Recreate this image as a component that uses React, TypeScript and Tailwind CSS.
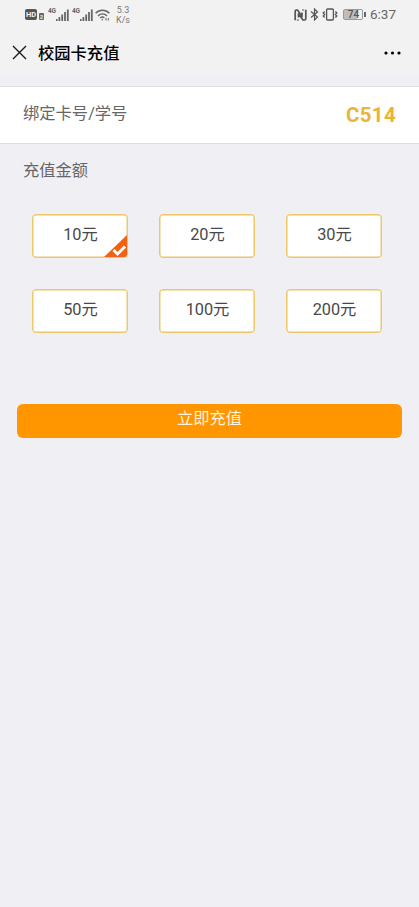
import { clsx } from "clsx";
import { useState } from "react";

const AMOUNTS = [10, 20, 30, 50, 100, 200];

export default function App() {
  const [amount, setAmount] = useState(10);

  return (
    <div className="flex min-h-screen flex-col bg-[#efeff4] font-[Roboto,'Noto_Sans_CJK_SC',sans-serif] text-[#666]">
      <header className="h-[75px] bg-[#f2f2f2]">
        <StatusBar />
        <TitleBar />
      </header>

      <section className="mt-[11px] flex h-[58px] items-center justify-between border-y border-[#dedee2] bg-white px-[23px]">
        <span className="-mt-[2px] text-[16.3px]">绑定卡号/学号</span>
        <span className="text-[20.5px] font-bold tracking-[0.3px] text-[#ebb434]">C514</span>
      </section>

      <h2 className="mt-[15px] pl-[23px] text-[16.3px] leading-6">充值金额</h2>

      <div className="mt-[31px] grid grid-cols-3 gap-x-[31px] gap-y-[31px] pr-[37px] pl-8">
        {AMOUNTS.map((value) => (
          <AmountOption
            key={value}
            value={value}
            selected={value === amount}
            onSelect={() => setAmount(value)}
          />
        ))}
      </div>

      <button className="mx-[17px] mt-[71px] flex h-[34px] justify-center rounded-[6px] bg-[#ff9600] pt-[3px] text-[16.3px] leading-6 text-[#fff3dc]">
        立即充值
      </button>
    </div>
  );
}

function AmountOption({
  value,
  selected,
  onSelect,
}: {
  value: number;
  selected: boolean;
  onSelect: () => void;
}) {
  return (
    <button
      onClick={onSelect}
      className="relative flex h-11 justify-center overflow-hidden rounded-[4px] border border-[#edc768] bg-white pt-2 pl-px text-[16.3px] leading-6 text-[#484848] shadow-[inset_0_0_0_0.5px_#edc768]"
    >
      {value}元
      {selected ? (
        <svg className="absolute right-0 bottom-0" width="23" height="22" viewBox="0 0 23 22">
          <path d="M23 0V22H0Z" fill="#f7600f" />
          <path d="M9.5 15L13.5 19L21 11.5" fill="none" stroke="#fff" strokeWidth="2.9" />
        </svg>
      ) : null}
    </button>
  );
}

function TitleBar() {
  return (
    <div className="flex h-[45px] items-center pl-3 text-black">
      <svg width="15" height="15" viewBox="0 0 15 15" stroke="#1a1a1a" strokeWidth="1.4">
        <path d="M1 1L14 14M14 1L1 14" />
      </svg>
      <h1 className="mt-[2px] ml-[11px] text-[16.3px] font-medium leading-6">校园卡充值</h1>
      <svg className="mr-[18px] ml-auto" width="17" height="4" viewBox="0 0 17 4">
        <circle cx="2" cy="2" r="1.6" />
        <circle cx="8.5" cy="2" r="1.6" />
        <circle cx="15" cy="2" r="1.6" />
      </svg>
    </div>
  );
}

function StatusBar() {
  return (
    <div className="flex h-[30px] items-center pr-[23px] pb-px pl-[25px] text-[#666]">
      <span className="flex h-[11px] w-3 items-center justify-center rounded-[2px] bg-[#555] text-[7.5px] font-bold text-[#f2f2f2]">
        HD
      </span>
      <span className="mt-[3px] ml-[2px] flex h-[7px] w-[5px] items-center justify-center rounded-[1px] bg-[#666] text-[6px] font-bold text-[#f2f2f2]">
        2
      </span>
      <Signal className="ml-1" />
      <Signal className="ml-[3px]" />
      <Wifi />
      <span className="ml-[6px] flex w-[14px] flex-col items-center text-[9px] leading-[10px] text-[#777]">
        <span>5.3</span>
        <span>K/s</span>
      </span>

      <div className="ml-auto flex items-center">
        <Nfc />
        <svg className="ml-[3px]" width="9" height="13" viewBox="0 0 9 13" fill="none" stroke="#555" strokeWidth="1.2">
          <path d="M1 3.5L7.5 9L4.5 12V1L7.5 4L1 9.5" />
        </svg>
        <svg className="ml-[3px]" width="16" height="13" viewBox="0 0 16 13" fill="none" stroke="#555" strokeWidth="1.3">
          <rect x="4.6" y="1" width="6.8" height="11" rx="1" />
          <path d="M2.6 3.5L1.2 5L2.6 6.5L1.2 8L2.6 9.5M13.4 3.5L14.8 5L13.4 6.5L14.8 8L13.4 9.5" />
        </svg>
        <span className="ml-[5px] flex h-[11px] w-5 items-center justify-center rounded-[2px] border border-[#999] bg-linear-to-r from-[#bdbdbd] from-75% to-[#f2f2f2] to-75% text-[10px] font-medium text-[#555]">
          74
        </span>
        <span className="ml-px h-[5px] w-[1.5px] bg-[#666]" />
        <span className="ml-1 text-[13.5px] leading-[15px]">6:37</span>
      </div>
    </div>
  );
}

function Signal({ className }: { className: string }) {
  return (
    <span className={clsx("flex h-3 w-[21px]", className)}>
      <span className="-mt-px w-2 text-[6.5px] font-bold leading-[7px] tracking-[-0.3px]">4G</span>
      <svg width="13" height="12" viewBox="0 0 13 12" fill="#666">
        <path d="M0 10H1.6V12H0ZM2.5 8H4.3V12H2.5ZM5.3 5.5H7.1V12H5.3ZM8.1 3H9.9V12H8.1ZM10.9 .5H12.7V12H10.9Z" />
      </svg>
    </span>
  );
}

function Wifi() {
  return (
    <svg className="ml-[2px]" width="15" height="12" viewBox="0 0 15 12" fill="none" stroke="#666" strokeWidth="1.4">
      <path d="M.6 4.3C4.5.2 10.5.2 14.4 4.3M3 6.9C5.5 4.2 9.5 4.2 12 6.9M5.2 9.1C6.5 7.8 8.3 7.8 9.4 8.8" />
      <circle cx="7.3" cy="10.7" r=".8" fill="#666" stroke="none" />
      <path d="M11 9V11.5M13.3 9V11.5" strokeWidth="1" />
    </svg>
  );
}

function Nfc() {
  return (
    <svg width="13" height="12" viewBox="0 0 13 12" fill="none" stroke="#555" strokeLinejoin="round">
      <path d="M1.2 11.2V2.2Q1.2 1 2.4 1H3.5L8 7.5V3.5" strokeWidth="1.7" />
      <path d="M11.8.8V9.8Q11.8 11 10.6 11H9L4.5 5V8.5" strokeWidth="1.7" />
      <path d="M2.8 11H5M8 1H10.2" strokeWidth="1.2" />
    </svg>
  );
}
